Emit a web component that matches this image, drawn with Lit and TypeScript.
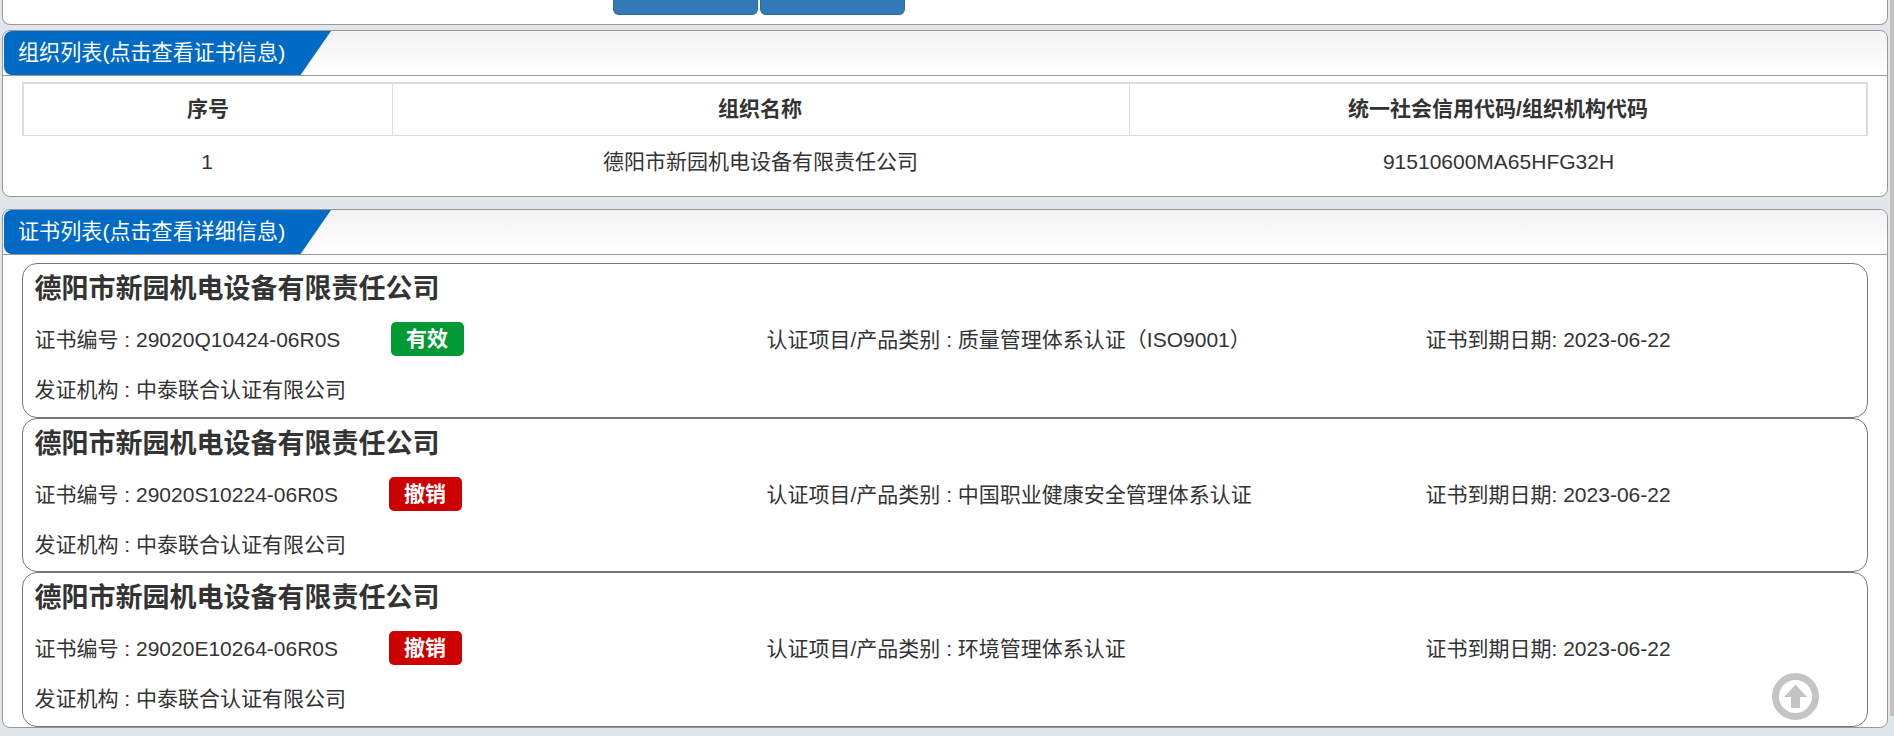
import { LitElement, html, css } from "lit";
import { customElement } from "lit/decorators.js";

const CO = "德阳市新园机电设备有限责任公司";
const certs = [
  { no: "29020Q10424-06R0S", st: "有效", ok: true, item: "质量管理体系认证（ISO9001）" },
  { no: "29020S10224-06R0S", st: "撤销", ok: false, item: "中国职业健康安全管理体系认证" },
  { no: "29020E10264-06R0S", st: "撤销", ok: false, item: "环境管理体系认证" },
];

@customElement("app-root")
export class AppRoot extends LitElement {
  static styles = css`
    :host {
      display: block;
      height: 736px;
      overflow: hidden;
      position: relative;
      background: #e1e6ea;
      font-family: "Liberation Sans", "Noto Sans CJK SC", sans-serif;
      font-size: 21px;
      color: #333;
    }
    .page { padding: 0 6px 0 2px; display: flex; flex-direction: column; }
    .panel {
      background: #fff;
      border: 1px solid #999;
      border-radius: 8px;
    }
    .top {
      height: 25px;
      box-sizing: border-box;
      border-top: 0;
      border-radius: 0 0 8px 8px;
      display: flex;
      gap: 2px;
      padding-left: 610px;
      margin-bottom: 5px;
    }
    .btn {
      width: 145px;
      height: 15px;
      box-sizing: border-box;
      background: #337ab7;
      border: 1px solid #2e6da4;
      border-top: 0;
      border-radius: 0 0 6px 6px;
    }
    .head {
      height: 45px;
      box-sizing: border-box;
      border-bottom: 1px solid #999;
      border-radius: 8px 8px 0 0;
      background: linear-gradient(#f2f2f2, #fff);
      display: flex;
    }
    .tab {
      width: 327px;
      height: 44px;
      margin-left: 1px;
      box-sizing: border-box;
      padding-left: 14px;
      background: #006ac4;
      color: #fff;
      font-size: 21.1px;
      line-height: 44px;
      border-radius: 8px 0 0 8px;
      clip-path: polygon(0 0, 100% 0, 90.7% 100%, 0 100%);
    }
    .org { height: 167px; box-sizing: border-box; margin-bottom: 12px; }
    .table {
      margin: 6px 19px 0 19px;
      display: grid;
      grid-template-columns: 370px 737px 1fr;
      text-align: center;
    }
    .th {
      height: 54px;
      line-height: 50px;
      box-sizing: border-box;
      font-weight: 700;
      border-top: 2px solid #ddd;
      border-bottom: 1px solid #ddd;
      border-left: 1px solid #ddd;
    }
    .th:first-child { border-left-width: 2px; }
    .th:nth-child(2) { padding-right: 2px; }
    .th:nth-child(3) { border-right: 2px solid #ddd; }
    .td { height: 53px; line-height: 51px; }
    .certs { height: 519px; box-sizing: border-box; }
    .list { padding: 8px 19px 0 19px; display: flex; flex-direction: column; }
    .card {
      height: 154.7px;
      box-sizing: border-box;
      border: 1px solid #777;
      border-radius: 15px;
      padding: 0 11.5px;
      display: flex;
      flex-direction: column;
    }
    .name { font-size: 27px; font-weight: 700; line-height: 51px; height: 50px; }
    .row { display: grid; grid-template-columns: 732px 659px 1fr; height: 50px; align-items: center; }
    .text { padding-bottom: 2px; }
    .cert { display: flex; align-items: center; }
    .no { width: 356px; }
    .no.narrow { width: 354px; }
    .badge {
      width: 73px;
      height: 34px;
      line-height: 34px;
      text-align: center;
      color: #fff;
      font-weight: 700;
      border-radius: 5px;
    }
    .ok { background: #009a34; }
    .bad { background: #cc0000; }
    .issuer { line-height: 50px; height: 50px; margin-top: 1px; }
    .top-btn { position: absolute; left: 1772px; top: 673px; width: 47px; height: 47px; }
    .sb { position: absolute; right: 0; top: 0; width: 4px; height: 716px; background: #c1c1c1; }
  `;

  render() {
    return html`
      <div class="page">
        <div class="panel top"><div class="btn"></div><div class="btn"></div></div>
        <div class="panel org">
          <div class="head"><div class="tab">组织列表(点击查看证书信息)</div></div>
          <div class="table">
            <div class="th">序号</div>
            <div class="th">组织名称</div>
            <div class="th">统一社会信用代码/组织机构代码</div>
            <div class="td">1</div>
            <div class="td">${CO}</div>
            <div class="td">91510600MA65HFG32H</div>
          </div>
        </div>
        <div class="panel certs">
          <div class="head"><div class="tab">证书列表(点击查看详细信息)</div></div>
          <div class="list">
            ${certs.map(
              (c) => html`
                <div class="card">
                  <div class="name">${CO}</div>
                  <div class="row">
                    <div class="cert">
                      <span class="no text ${c.ok ? "" : "narrow"}">证书编号 : ${c.no}</span>
                      <span class="badge ${c.ok ? "ok" : "bad"}">${c.st}</span>
                    </div>
                    <div class="text">认证项目/产品类别 : ${c.item}</div>
                    <div class="text">证书到期日期: 2023-06-22</div>
                  </div>
                  <div class="issuer">发证机构 : 中泰联合认证有限公司</div>
                </div>
              `
            )}
          </div>
        </div>
      </div>
      <div class="sb"></div>
      <svg class="top-btn" viewBox="0 0 47 47">
        <circle cx="23.5" cy="23.5" r="20" fill="none" stroke="#c4c4c4" stroke-width="7" />
        <path d="M23.5 11.5 L35 24 H28 V35 H19 V24 H12 Z" fill="#c4c4c4" />
      </svg>
    `;
  }
}
